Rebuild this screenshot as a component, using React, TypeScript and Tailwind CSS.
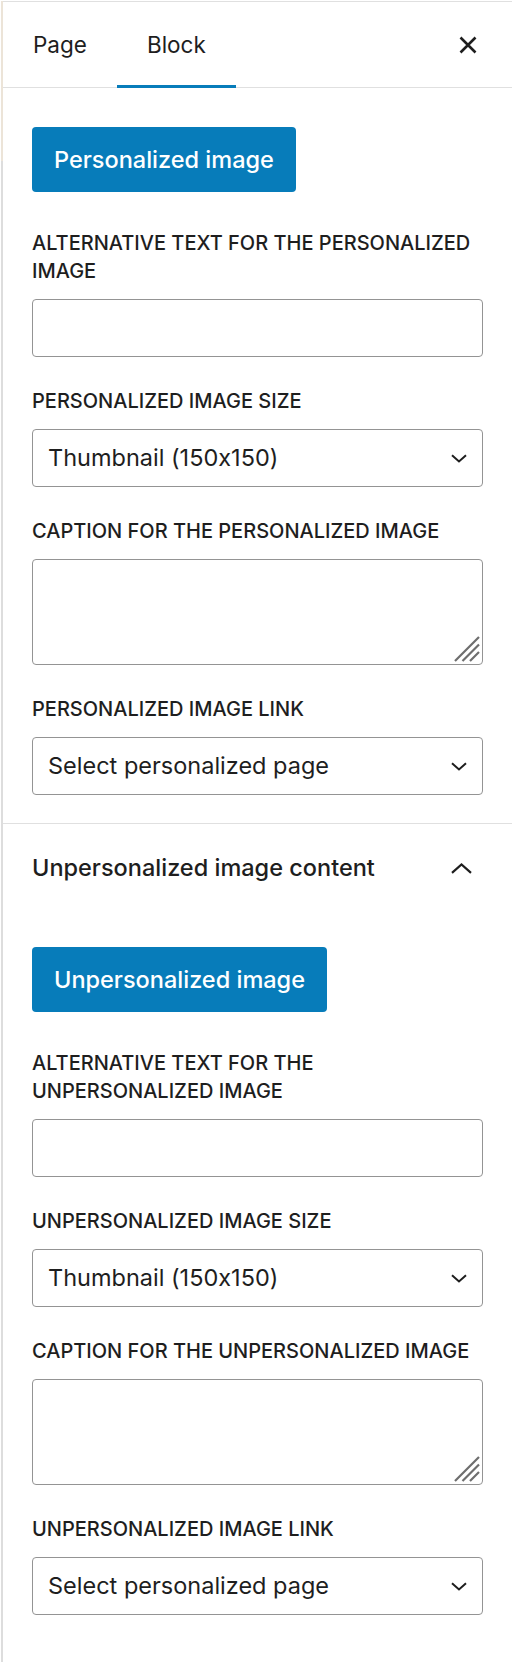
import type { ReactNode } from 'react'

function Label({ children }: { children: ReactNode }) {
  return (
    <div className="text-[20px] leading-[28px] font-medium uppercase text-[#1e1e1e]">
      {children}
    </div>
  )
}

function Field({ label, children }: { label: ReactNode; children: ReactNode }) {
  return (
    <div className="flex flex-col gap-[14px]">
      <Label>{label}</Label>
      {children}
    </div>
  )
}

function TextInput() {
  return <div className="h-[58px] rounded-[4px] border border-[#949494] bg-white" />
}

function SelectBox({ value }: { value: string }) {
  return (
    <div className="h-[58px] rounded-[4px] border border-[#949494] bg-white flex items-center justify-between pl-[15px] pr-[15px]">
      <span className="text-[23.5px] text-[#1e1e1e]">{value}</span>
      <svg width="16" height="9" viewBox="0 0 16 9" fill="none">
        <path d="M1 1.2 L8 7.4 L15 1.2" stroke="#1e1e1e" strokeWidth="2" />
      </svg>
    </div>
  )
}

function TextArea() {
  return (
    <div className="relative h-[106px] rounded-[4px] border border-[#949494] bg-white">
      {/* resize grip */}
      <svg className="absolute right-[2px] bottom-[2px]" width="26" height="26" viewBox="0 0 26 26" fill="none">
        <path d="M1 25 L25 1 M8.5 25 L25 8.5 M16 25 L25 16" stroke="#6e6e6e" strokeWidth="2.2" />
      </svg>
    </div>
  )
}

function PrimaryButton({ children }: { children: ReactNode }) {
  return (
    <div className="flex">
      <button className="h-[65px] px-[22px] rounded-[4px] bg-[#077cba] text-white text-[23.5px] font-medium">
        {children}
      </button>
    </div>
  )
}

function ImageFields({ kind, title }: { kind: string; title: string }) {
  return (
    <div className="flex flex-col">
      <PrimaryButton>{title}</PrimaryButton>
      <div className="mt-[37px] flex flex-col gap-[30px]">
        <Field label={`Alternative text for the ${kind} image`}>
          <TextInput />
        </Field>
        <Field label={`${kind} image size`}>
          <SelectBox value="Thumbnail (150x150)" />
        </Field>
        <Field label={`Caption for the ${kind} image`}>
          <TextArea />
        </Field>
        <Field label={`${kind} image link`}>
          <SelectBox value="Select personalized page" />
        </Field>
      </div>
    </div>
  )
}

export default function App() {
  return (
    <div className="min-h-[1662px] bg-white pt-px pl-px flex font-['Inter',sans-serif] [font-feature-settings:'calt'_0] text-[#1e1e1e]">
      {/* editor edge */}
      <div className="w-[2px] flex flex-col">
        <div className="h-[160px] bg-[#ece4d8]" />
        <div className="flex-1 bg-[#dddddd]" />
      </div>

      <div className="flex-1 border-t border-[#e0e0e0]">
        {/* Tabs */}
        <div className="h-[86px] border-b border-[#e0e0e0] flex items-stretch justify-between">
          <div className="flex">
            <button className="px-[30px] text-[22.5px] text-[#1e1e1e]">Page</button>
            <button className="relative px-[30px] text-[22.5px] text-[#1e1e1e]">
              Block
              <span className="absolute left-0 right-0 bottom-[-1px] h-[3px] bg-[#077cba]" />
            </button>
          </div>
          <button className="mr-[22px] self-center w-[44px] h-[44px] flex items-center justify-center">
            <svg width="18" height="18" viewBox="0 0 18 18" fill="none">
              <path d="M1.5 1.5 L16.5 16.5 M16.5 1.5 L1.5 16.5" stroke="#1e1e1e" strokeWidth="2.6" />
            </svg>
          </button>
        </div>

        {/* Personalized */}
        <div className="px-[29px] pt-[39px] pb-[28px]">
          <ImageFields kind="personalized" title="Personalized image" />
        </div>

        {/* Unpersonalized panel */}
        <div className="border-t border-[#e0e0e0]">
          <div className="h-[88px] flex items-center justify-between pl-[29px] pr-[40px]">
            <span className="text-[23.5px] font-medium">Unpersonalized image content</span>
            <svg width="21" height="11" viewBox="0 0 21 11" fill="none">
              <path d="M1 9.8 L10.5 1.5 L20 9.8" stroke="#1e1e1e" strokeWidth="2.2" />
            </svg>
          </div>
          <div className="px-[29px] pt-[35px] pb-[47px]">
            <ImageFields kind="unpersonalized" title="Unpersonalized image" />
          </div>
        </div>
      </div>
    </div>
  )
}
